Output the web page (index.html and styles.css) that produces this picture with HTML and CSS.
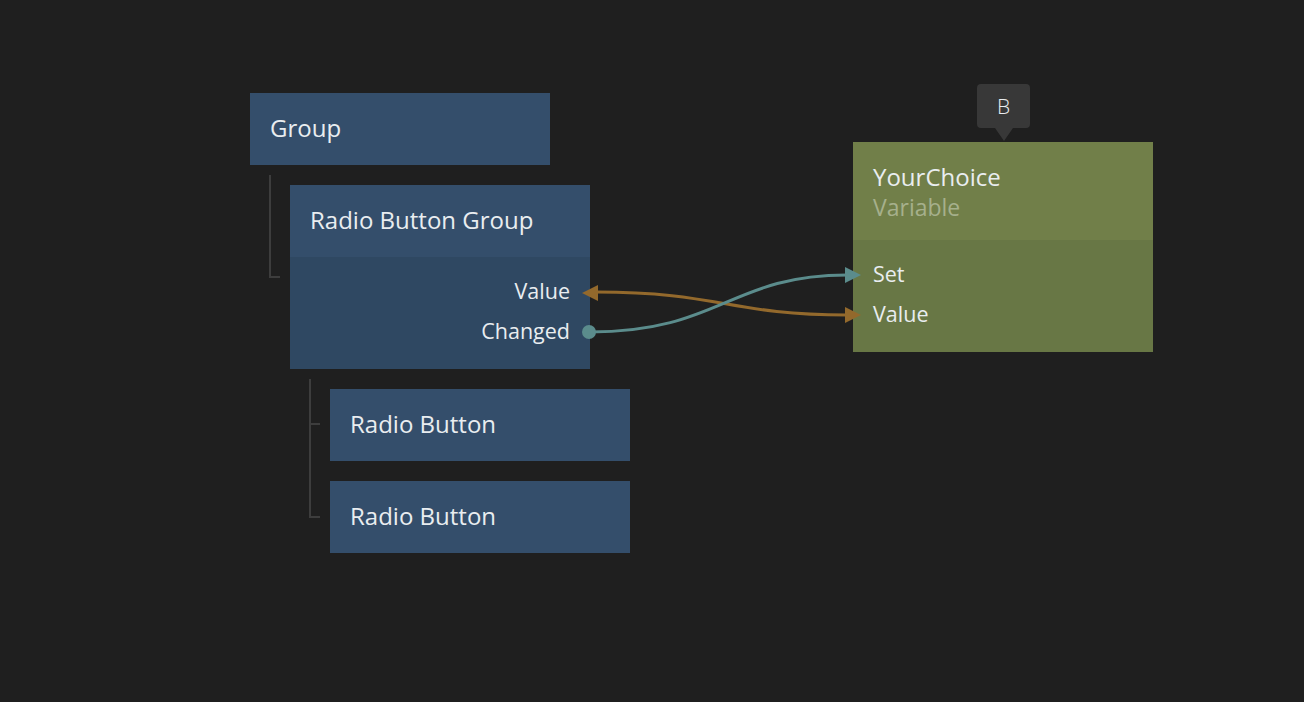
FILE: index.html
```html
<!DOCTYPE html>
<html>
<head>
<meta charset="utf-8">
<link rel="stylesheet" href="styles.css">
</head>
<body>
<div class="canvas">
  <div class="tree tree-a"></div>
  <div class="tree tree-b"><span class="tick"></span></div>

  <div class="node blue group">
    <div class="head"><span class="title">Group</span></div>
  </div>

  <div class="node blue rbg">
    <div class="head"><span class="title">Radio Button Group</span></div>
    <div class="ports right">
      <div class="port">Value</div>
      <div class="port">Changed</div>
    </div>
  </div>

  <div class="node blue rb1">
    <div class="head"><span class="title">Radio Button</span></div>
  </div>
  <div class="node blue rb2">
    <div class="head"><span class="title">Radio Button</span></div>
  </div>

  <div class="node green var">
    <div class="head tall">
      <span class="title">YourChoice</span>
      <span class="sub">Variable</span>
    </div>
    <div class="ports">
      <div class="port">Set</div>
      <div class="port">Value</div>
    </div>
  </div>

  <div class="badge">B</div>

  <svg class="wires" width="1304" height="702" viewBox="0 0 1304 702">
    <path d="M596 292 C 720 292, 730 315, 847 315" fill="none" stroke="#93692c" stroke-width="3"/>
    <polygon points="582,293 598,285 598,301" fill="#93692c"/>
    <polygon points="861,315 845,307 845,323" fill="#93692c"/>
    <path d="M590 332 C 720 332, 730 275, 847 275" fill="none" stroke="#5b8c8c" stroke-width="3"/>
    <polygon points="861,275 845,267 845,283" fill="#5b8c8c"/>
    <circle cx="589" cy="332" r="7" fill="#5b8c8c"/>
  </svg>
</div>
</body>
</html>
```

FILE: styles.css
```css
html, body {
  margin: 0;
  padding: 0;
  background: #1f1f1f;
}
body {
  width: 1304px;
  height: 702px;
  overflow: hidden;
  font-family: "Open Sans", "Noto Sans", sans-serif;
  color: #e9edf0;
}
.canvas {
  position: relative;
  width: 1304px;
  height: 702px;
}
.node {
  position: absolute;
  width: 300px;
  display: flex;
  flex-direction: column;
}
.blue { background: #344e6b; }
.blue .ports { background: #2f4862; }
.green { background: #717f49; }
.green .ports { background: #687745; }

.head {
  height: 72px;
  display: flex;
  flex-direction: column;
  justify-content: center;
  padding: 0 20px;
  box-sizing: border-box;
}
.head.tall {
  height: 98px;
  justify-content: flex-start;
  padding-top: 22px;
}
.title {
  font-size: 24px;
  line-height: 30px;
  margin-top: -2px;
}
.sub {
  font-size: 23px;
  line-height: 30px;
  color: #a6b08c;
}
.ports {
  height: 112px;
  padding: 14px 20px 18px;
  box-sizing: border-box;
  display: flex;
  flex-direction: column;
}
.ports.right { align-items: flex-end; }
.port {
  height: 40px;
  line-height: 40px;
  font-size: 21.5px;
}

.group { left: 250px; top: 93px; }
.rbg { left: 290px; top: 185px; }
.rb1 { left: 330px; top: 389px; }
.rb2 { left: 330px; top: 481px; }
.var { left: 853px; top: 142px; }

.tree {
  position: absolute;
  border-left: 2px solid #3d3d3d;
  border-bottom: 2px solid #3d3d3d;
  width: 9px;
}
.tree-a { left: 269px; top: 175px; height: 101px; }
.tree-b { left: 309px; top: 379px; height: 137px; }
.tick {
  position: absolute;
  left: 0;
  top: 44px;
  width: 9px;
  border-top: 2px solid #3d3d3d;
}

.badge {
  position: absolute;
  left: 977px;
  top: 84px;
  width: 53px;
  height: 44px;
  background: #383838;
  border-radius: 4px;
  font-size: 21px;
  font-weight: 300;
  line-height: 44px;
  text-align: center;
  color: #e9edf0;
}
.badge::after {
  content: "";
  position: absolute;
  left: 50%;
  top: 44px;
  margin-left: -9px;
  border-left: 9px solid transparent;
  border-right: 9px solid transparent;
  border-top: 13px solid #383838;
}
.wires {
  position: absolute;
  left: 0;
  top: 0;
  pointer-events: none;
}
```
